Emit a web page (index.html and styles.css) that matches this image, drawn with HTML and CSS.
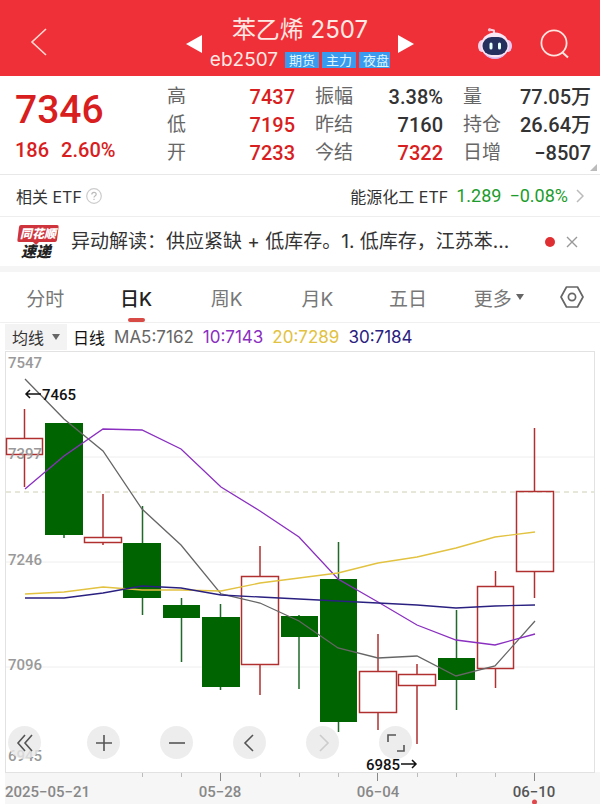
FILE: index.html
```html
<!DOCTYPE html>
<html lang="zh-CN">

<head>
    <meta charset="UTF-8">
    <meta name="viewport" content="width=device-width, initial-scale=1.0">
    <title>苯乙烯2507</title>
    <link rel="stylesheet" href="styles.css">
</head>

<body>
    <header class="header">
        <div class="header-left">
            <button class="icon-btn" aria-label="返回">
                <svg width="18" height="30" viewBox="0 0 18 30"><path d="M16 2L2 15L16 28" fill="none" stroke="#ffd9d2" stroke-width="1.6"/></svg>
            </button>
        </div>
        <div class="switcher">
            <button class="icon-btn" aria-label="上一个">
                <svg width="16" height="18" viewBox="0 0 16 18"><path d="M0 9L16 0V18Z" fill="#fff"/></svg>
            </button>
            <div class="title">
                <h1>苯乙烯 2507</h1>
                <div class="subtitle">
                    <span class="code">eb2507</span>
                    <span class="tag">期货</span>
                    <span class="tag">主力</span>
                    <span class="tag">夜盘</span>
                </div>
            </div>
            <button class="icon-btn" aria-label="下一个">
                <svg width="16" height="18" viewBox="0 0 16 18"><path d="M16 9L0 0V18Z" fill="#fff"/></svg>
            </button>
        </div>
        <div class="header-right">
            <button class="icon-btn" aria-label="智能助手">
                <svg width="34" height="34" viewBox="0 0 34 34">
                    <path d="M16 7V3.500M16 3.500L11.500 2.500" stroke="#f6d5e4" stroke-width="2" stroke-linecap="round"/>
                    <circle cx="11.500" cy="2.800" r="1.600" fill="#f3c3d6"/>
                    <ellipse cx="4" cy="19" rx="4" ry="6" fill="#f4d3ea"/>
                    <ellipse cx="30" cy="19" rx="4" ry="6" fill="#e9c9f3"/>
                    <ellipse cx="17" cy="18.500" rx="14" ry="13" fill="#f9e6f5"/>
                    <path d="M6 26Q17 35 28 26Q24 32 17 32Q10 32 6 26Z" fill="#d9b4ee"/>
                    <rect x="4.500" y="10" width="25" height="18" rx="9" fill="#26305f"/>
                    <rect x="11.500" y="15.500" width="3" height="7" rx="1.500" fill="#e6ffff"/>
                    <rect x="20" y="15.500" width="3" height="7" rx="1.500" fill="#e6ffff"/>
                </svg>
            </button>
            <button class="icon-btn" aria-label="搜索">
                <svg width="30" height="30" viewBox="0 0 30 30"><circle cx="14" cy="14" r="12.600" fill="none" stroke="#ffe4df" stroke-width="1.800"/><path d="M22 23L28 28.500" stroke="#ffe4df" stroke-width="2"/></svg>
            </button>
        </div>
    </header>

    <section class="quote">
        <div class="price">
            <div class="last">7346</div>
            <div class="change"><span>186</span><span>2.60%</span></div>
        </div>
        <dl class="stats">
            <div><dt>高</dt><dd class="up">7437</dd></div>
            <div><dt>振幅</dt><dd>3.38%</dd></div>
            <div><dt>量</dt><dd>77.05万</dd></div>
            <div><dt>低</dt><dd class="up">7195</dd></div>
            <div><dt>昨结</dt><dd>7160</dd></div>
            <div><dt>持仓</dt><dd>26.64万</dd></div>
            <div><dt>开</dt><dd class="up">7233</dd></div>
            <div><dt>今结</dt><dd class="up">7322</dd></div>
            <div><dt>日增</dt><dd>−8507</dd></div>
        </dl>
        <span class="corner"></span>
    </section>

    <section class="etf">
        <span>相关 ETF</span>
        <button class="icon-btn" aria-label="说明">
            <svg width="16" height="16" viewBox="0 0 16 16"><circle cx="8" cy="8" r="7.300" fill="none" stroke="#ccc" stroke-width="1.200"/><path d="M5.800 6.400Q5.800 4.300 8 4.300T10.200 6.200Q10.200 7.200 9 7.900Q8 8.500 8 9.500M8 10.800V12" fill="none" stroke="#bbb" stroke-width="1.200"/></svg>
        </button>
        <a class="etf-link" href="#etf">
            <span>能源化工 ETF</span>
            <span class="down">1.289</span>
            <span class="down">−0.08%</span>
            <svg width="8" height="14" viewBox="0 0 8 14"><path d="M1 1L7 7L1 13" fill="none" stroke="#bbb" stroke-width="1.500"/></svg>
        </a>
    </section>

    <section class="news">
        <svg class="news-logo" width="42" height="36" viewBox="0 0 42 36">
            <path d="M4 1H40Q42 1 41.600 3L40 16Q39.700 18 38 18H22L19 21L16 18H2Q0 18 0.400 16L2 3Q2.200 1 4 1Z" fill="#cf343c"/>
            <text x="21" y="14" class="logo-top">同花顺</text>
            <text x="19" y="33" class="logo-bottom">速递</text>
        </svg>
        <a class="news-text" href="#news">异动解读：供应紧缺 + 低库存。1. 低库存，江苏苯...</a>
        <span class="dot"></span>
        <button class="icon-btn" aria-label="关闭">
            <svg width="12" height="12" viewBox="0 0 12 12"><path d="M1 1L11 11M11 1L1 11" stroke="#999" stroke-width="1.400"/></svg>
        </button>
    </section>

    <nav class="tabs">
        <button class="tab">分时</button>
        <button class="tab active">日K</button>
        <button class="tab">周K</button>
        <button class="tab">月K</button>
        <button class="tab">五日</button>
        <button class="tab">更多<span class="caret"></span></button>
        <button class="settings" aria-label="设置">
            <svg width="24" height="22" viewBox="0 0 24 22"><path d="M6.500 1H17.500L23 11L17.500 21H6.500L1 11Z" fill="none" stroke="#666" stroke-width="1.700" stroke-linejoin="round"/><circle cx="12" cy="11" r="3.600" fill="none" stroke="#666" stroke-width="1.700"/></svg>
        </button>
    </nav>

    <div class="averages">
        <button class="ma-select">均线<span class="caret"></span></button>
        <span class="period">日线</span>
        <span class="ma5">MA5:7162</span>
        <span class="ma10">10:7143</span>
        <span class="ma20">20:7289</span>
        <span class="ma30">30:7184</span>
    </div>

    <main class="chart">
        <svg class="plot" viewBox="0 0 600 453" role="img" aria-label="日K线图">
            <!-- axis strip -->
            <rect x="5" y="421" width="595" height="32" fill="#f6f6f6"/>
            <!-- grid -->
            <path d="M6 106H594M6 211H594M6 316H594" class="grid"/>
            <rect x="5.500" y="0.500" width="589" height="421" class="frame"/>
            <path d="M6 141H594" class="last-line"/>

            <!-- rising candles -->
            <g class="rise">
                <path d="M24.500 58V87M24.500 104V136M103 143V186M103 192V194M260 195V225M260 314V344M378 283V320M378 362V379M417 313V323M417 335V393M495.500 220V235M495.500 318V337M534.500 77V140M534.500 221V247"/>
                <rect x="6.500" y="87.500" width="36" height="16"/>
                <rect x="84.500" y="186.500" width="37" height="5"/>
                <rect x="241.500" y="225.500" width="37" height="88"/>
                <rect x="359.500" y="320.500" width="37" height="41"/>
                <rect x="398.500" y="323.500" width="37" height="11"/>
                <rect x="477.500" y="235.500" width="36" height="82"/>
                <rect x="516.500" y="140.500" width="37" height="80"/>
            </g>
            <!-- falling candles -->
            <g class="fall">
                <path d="M64 72V187M142.500 155V264M181.500 247V311M220.500 253V339M299 264V338M338.500 191V381M456.500 259V359"/>
                <rect x="45" y="72" width="38" height="112"/>
                <rect x="123" y="192" width="38" height="55"/>
                <rect x="163" y="254" width="37" height="13"/>
                <rect x="202" y="266" width="38" height="70"/>
                <rect x="281" y="265" width="37" height="21"/>
                <rect x="320" y="228" width="37" height="143"/>
                <rect x="438" y="307" width="37" height="22"/>
            </g>

            <!-- moving averages -->
            <g class="lines">
                <polyline stroke="#666" points="25,28 64,68 103,100 142,158 181,194 221,243 260,252 299,270 338,297 378,307 417,305 456,325 495,315 535,270"/>
                <polyline stroke="#8a2fc0" points="25,138 64,105 103,78 142,79 181,98 221,136 260,160 299,186 338,228 378,251 417,274 456,289 495,294 535,283"/>
                <polyline stroke="#e2c240" points="25,243 64,241 103,236 142,239 181,239 221,240 260,232 299,227 338,222 378,212 417,206 456,197 495,186 535,181"/>
                <polyline stroke="#2a2080" points="25,247 64,247 103,242 142,235 181,237 221,244 260,246 299,248 338,250 378,252 417,254 456,257 495,255 535,254"/>
            </g>

            <g class="scale">
                <text x="8" y="17">7547</text>
                <text x="8" y="108">7397</text>
                <text x="8" y="214">7246</text>
                <text x="8" y="319">7096</text>
                <text x="8" y="410">6945</text>
            </g>
            <g class="extreme">
                <text x="42" y="49">7465</text>
                <text x="366" y="419">6985</text>
                <path d="M41 43H26M30 39L26 43L30 47M401 413H416M412 409L416 413L412 417"/>
            </g>

            <!-- dates -->
            <path d="M142.500 422V426M181.500 422V426M260.500 422V426M299.500 422V426M338.500 422V426M417.500 422V426M456.500 422V426M495.500 422V426" stroke="#bbb"/>
            <path d="M220.500 422V430M377.500 422V430M534.500 422V430" stroke="#888"/>
            <g class="dates">
                <text x="5" y="446">2025−05−21</text>
                <text x="220" y="446" text-anchor="middle">05−28</text>
                <text x="378" y="446" text-anchor="middle">06−04</text>
                <text x="534" y="446" text-anchor="middle" class="today">06−10</text>
            </g>
            <circle cx="534.500" cy="451" r="2.500" fill="#e0484c"/>
        </svg>
        <div class="controls">
            <button class="first" aria-label="最早">
                <svg width="18" height="18" viewBox="0 0 18 18"><path d="M9 1L2 9L9 17M16 1L9 9L16 17"/></svg>
            </button>
            <button aria-label="放大">
                <svg width="18" height="18" viewBox="0 0 18 18"><path d="M1 9H17M9 1V17"/></svg>
            </button>
            <button aria-label="缩小">
                <svg width="18" height="18" viewBox="0 0 18 18"><path d="M1 9H17"/></svg>
            </button>
            <button aria-label="左移">
                <svg width="18" height="18" viewBox="0 0 18 18"><path d="M12 1L4 9L12 17"/></svg>
            </button>
            <button class="disabled" aria-label="右移" disabled>
                <svg width="18" height="18" viewBox="0 0 18 18"><path d="M6 1L14 9L6 17"/></svg>
            </button>
            <button aria-label="全屏">
                <svg width="18" height="18" viewBox="0 0 18 18"><path d="M1 8V1H9M17 11V17H10"/></svg>
            </button>
        </div>
    </main>
</body>

</html>
```
FILE: styles.css
```css
* {
    box-sizing: border-box;
}

body {
    margin: 0;
    background-color: #fff;
    color: #333;
    font-family: Inter, "Noto Sans CJK SC", sans-serif;
    font-size: 16px;
}

button {
    padding: 0;
    border: none;
    background: none;
    color: inherit;
    font: inherit;
    cursor: pointer;
}

a {
    color: inherit;
    text-decoration: none;
}

svg {
    display: block;
}

.header {
    display: grid;
    grid-template-columns: 1fr auto 1fr;
    align-items: center;
    height: 76px;
    padding: 12px 30px 0;
    background-color: #ef3038;
    color: #ffe9e4;
}

.switcher,
.header-right {
    display: flex;
    align-items: center;
    gap: 8px;
}

.header-right {
    justify-content: flex-end;
    gap: 28px;
}

.title {
    text-align: center;
}

h1 {
    margin: 0;
    font-size: 24px;
    font-weight: 400;
    line-height: 32px;
}

.subtitle {
    display: flex;
    align-items: center;
    justify-content: center;
    gap: 3px;
    line-height: 28px;
}

.code {
    margin-right: 4px;
    font-size: 19px;
}

.tag {
    padding: 0 4px;
    background-color: #3a9bee;
    color: #dff6ff;
    font-size: 13px;
    line-height: 16px;
}

.tag:last-child {
    padding: 0 1px 0 4px;
}

.quote {
    position: relative;
    display: flex;
    height: 99px;
    padding: 7px 9px 0 15px;
    border-bottom: 1px solid #e8e8e8;
    font-family: Roboto, "Noto Sans CJK SC", sans-serif;
    font-weight: 500;
}

.price {
    width: 152px;
    color: #d81e1e;
}

.last {
    font-size: 39px;
    line-height: 54px;
}

.change {
    display: flex;
    gap: 12px;
    font-size: 20px;
    line-height: 26px;
}

.stats {
    flex: 1;
    display: grid;
    grid-template-columns: repeat(3, 1fr);
    grid-auto-rows: 28px;
    column-gap: 20px;
    margin: 0;
    line-height: 28px;
}

.stats div {
    display: flex;
    justify-content: space-between;
}

.stats dt {
    color: #666;
    font-size: 19px;
    font-weight: 400;
}

.stats dd {
    margin: 0;
    font-size: 20px;
}

.stats .up {
    color: #d81e1e;
}

.corner {
    position: absolute;
    right: 3px;
    bottom: 3px;
    border-left: 7px solid transparent;
    border-bottom: 7px solid #bbb;
}

.etf {
    display: flex;
    align-items: center;
    gap: 4px;
    height: 42px;
    padding: 0 16px;
    border-bottom: 1px solid #eee;
}

.etf-link {
    display: flex;
    align-items: center;
    gap: 8px;
    margin-left: auto;
}

.down {
    color: #1c9c2c;
    font-family: Roboto, sans-serif;
    font-size: 18px;
}

.news {
    display: flex;
    align-items: center;
    height: 55px;
    padding: 0 22px 0 17px;
    border-bottom: 6px solid #f5f5f5;
}

.news-logo {
    flex: none;
}

.logo-top,
.logo-bottom {
    font-family: "Noto Sans CJK SC", sans-serif;
    font-size: 12px;
    font-style: italic;
    font-weight: 900;
    text-anchor: middle;
    fill: #fff;
}

.logo-bottom {
    font-size: 15px;
    fill: #222;
}

.news-text {
    flex: 1;
    margin: 0 20px 0 12px;
    white-space: nowrap;
    font-size: 19px;
    line-height: 28px;
}

.dot {
    width: 10px;
    height: 10px;
    margin-right: 11px;
    border-radius: 50%;
    background-color: #e02f33;
}

.tabs {
    display: flex;
    height: 51px;
    border-bottom: 1px solid #f0f0f0;
}

.tab {
    position: relative;
    flex: 1;
    display: flex;
    align-items: center;
    justify-content: center;
    color: #777;
    font-size: 19px;
}

.tab.active {
    color: #222;
    font-weight: 500;
}

.tab.active::after {
    content: "";
    position: absolute;
    bottom: 0;
    width: 17px;
    height: 4px;
    border-radius: 2px;
    background-color: #d84a45;
}

.caret {
    margin-left: 4px;
    border: 4px solid transparent;
    border-top: 6px solid #666;
    border-bottom: none;
}

.settings {
    display: flex;
    align-items: center;
    justify-content: center;
    width: 56px;
}

.averages {
    display: flex;
    align-items: center;
    gap: 9px;
    height: 28px;
    padding-left: 5px;
    font-size: 17px;
    white-space: nowrap;
}

.ma-select {
    display: flex;
    align-items: center;
    height: 26px;
    padding: 0 7px;
    background-color: #f3f3f3;
    font-size: 16px;
}

.ma-select .caret {
    margin-left: 8px;
}

.period {
    margin-left: -3px;
    color: #111;
    font-size: 16px;
}

.ma5 {
    color: #666;
}

.ma10 {
    color: #8a2fc0;
}

.ma20 {
    color: #e2c240;
}

.ma30 {
    color: #2a2080;
}

.chart {
    position: relative;
}

.plot {
    width: 100%;
    height: auto;
    font-family: Roboto, sans-serif;
    font-weight: 500;
}

.grid {
    stroke: #eee;
}

.frame {
    fill: none;
    stroke: #e2e2e2;
}

.last-line {
    stroke: #d0d0b4;
    stroke-dasharray: 5 4;
}

.rise {
    fill: #fff;
    stroke: #b03030;
    stroke-width: 1.5;
}

.rise rect {
    fill: none;
}

.fall {
    fill: #006400;
}

.fall path {
    stroke: #1f6a2a;
    stroke-width: 1.5;
}

.lines {
    fill: none;
    stroke-width: 1.3;
}

.scale {
    fill: #999;
    font-size: 15px;
}

.extreme {
    fill: #111;
    font-size: 15px;
}

.extreme path {
    fill: none;
    stroke: #111;
    stroke-width: 1.5;
}

.dates {
    fill: #888;
    font-size: 15px;
}

.dates .today {
    fill: #555;
}

.controls {
    position: absolute;
    bottom: 45px;
    left: 8px;
    display: flex;
    gap: 40px;
}

.controls button {
    display: flex;
    align-items: center;
    justify-content: center;
    width: 33px;
    height: 33px;
    border-radius: 50%;
    background-color: rgba(232, 232, 232, 0.8);
}

.controls .first {
    margin-right: 6px;
}

.controls path {
    fill: none;
    stroke: #555;
    stroke-width: 1.6;
}

.controls .disabled path {
    stroke: #ccc;
}
```
